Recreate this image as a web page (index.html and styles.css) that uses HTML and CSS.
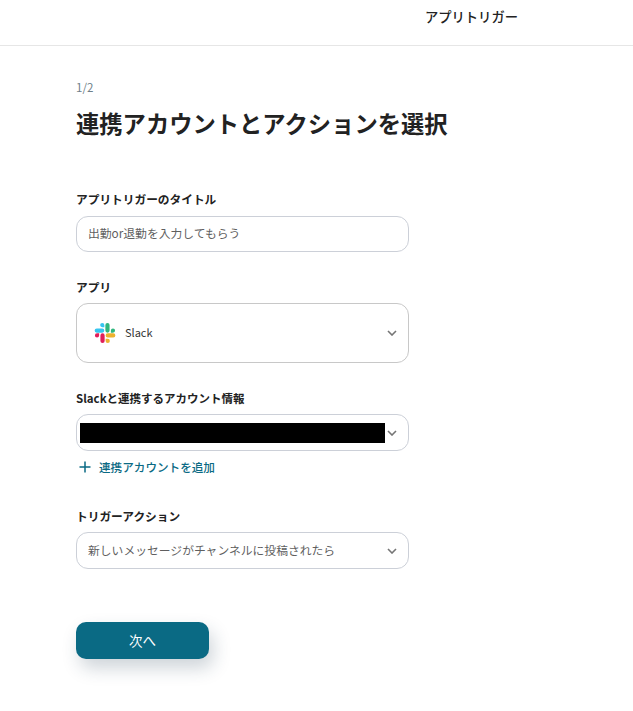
FILE: index.html
```html
<!DOCTYPE html>
<html lang="ja">
<head>
  <meta charset="UTF-8" />
  <meta name="viewport" content="width=device-width, initial-scale=1.0"/>
  <title>アプリトリガー</title>
  <link rel="stylesheet" href="styles.css">
</head>
<body>
  <header class="topbar">
    <span class="topbar-title">アプリトリガー</span>
  </header>

  <main class="content">
    <p class="step">1/2</p>
    <h1 class="heading">連携アカウントとアクションを選択</h1>

    <div class="field field-title">
      <label class="label">アプリトリガーのタイトル</label>
      <div class="box box-text"><span class="box-value">出勤or退勤を入力してもらう</span></div>
    </div>

    <div class="field field-app">
      <label class="label">アプリ</label>
      <div class="box box-app">
        <svg class="slack-logo" viewBox="0 0 24 24" width="22" height="22">
          <path fill="#36c5f0" d="M9 1a2.3 2.3 0 0 0 0 4.6h2.3V3.3A2.3 2.3 0 0 0 9 1zM9 7H3a2.3 2.3 0 0 0 0 4.6h6A2.3 2.3 0 0 0 9 7z"/>
          <path fill="#2eb67d" d="M23 9.3a2.3 2.3 0 0 0-4.6 0v2.3h2.3A2.3 2.3 0 0 0 23 9.3zM17 9.3v-6a2.3 2.3 0 0 0-4.6 0v6a2.3 2.3 0 0 0 4.6 0z"/>
          <path fill="#ecb22e" d="M15 23a2.3 2.3 0 0 0 0-4.6h-2.3v2.3A2.3 2.3 0 0 0 15 23zM15 17h6a2.3 2.3 0 0 0 0-4.6h-6a2.3 2.3 0 0 0 0 4.6z"/>
          <path fill="#e01e5a" d="M1 14.7a2.3 2.3 0 0 0 4.6 0v-2.3H3.3A2.3 2.3 0 0 0 1 14.7zM7 14.7v6a2.3 2.3 0 0 0 4.6 0v-6a2.3 2.3 0 0 0-4.6 0z"/>
        </svg>
        <span class="app-name">Slack</span>
        <svg class="chevron" viewBox="0 0 10 6" width="10" height="6"><path d="M1 1l4 4 4-4" fill="none" stroke="#757575" stroke-width="1.6"/></svg>
      </div>
    </div>

    <div class="field field-account">
      <label class="label label-slack">Slackと連携するアカウント情報</label>
      <div class="box box-account">
        <div class="redacted"></div>
        <svg class="chevron" viewBox="0 0 10 6" width="10" height="6"><path d="M1 1l4 4 4-4" fill="none" stroke="#757575" stroke-width="1.6"/></svg>
      </div>
      <a class="add-link" href="#">
        <svg viewBox="0 0 12 12" width="12" height="12"><path d="M6 .5v11M.5 6h11" stroke="#0a6a84" stroke-width="1.5"/></svg>
        <span>連携アカウントを追加</span>
      </a>
    </div>

    <div class="field field-action">
      <label class="label">トリガーアクション</label>
      <div class="box box-text box-select">
        <span class="box-value">新しいメッセージがチャンネルに投稿されたら</span>
        <svg class="chevron" viewBox="0 0 10 6" width="10" height="6"><path d="M1 1l4 4 4-4" fill="none" stroke="#757575" stroke-width="1.6"/></svg>
      </div>
    </div>

    <button class="next-btn">次へ</button>
  </main>
</body>
</html>
```

FILE: styles.css
```css
body {
  margin: 0;
  background: #fff;
  color: #222;
  font-family: "Noto Sans CJK JP", "Noto Sans", sans-serif;
}

.topbar {
  height: 45px;
  border-bottom: 1px solid #e6e6e6;
  display: flex;
  justify-content: flex-end;
  padding-right: 115px;
}

.topbar-title {
  font-size: 13.3px;
  font-weight: 500;
  line-height: 34px;
}

.content {
  padding-left: 76px;
  width: 333px;
  padding-bottom: 40px;
}

.step {
  margin: 0;
  padding-top: 32px;
  font-size: 11.5px;
  line-height: 18px;
  color: #6f7f8a;
}

.heading {
  margin: 10px 0 0;
  font-size: 23.3px;
  font-weight: 700;
  line-height: 34px;
  white-space: nowrap;
}

.field-title { margin-top: 50px; }
.field-title .label { margin-bottom: 8px; }
.field-app { margin-top: 26px; }
.field-account { margin-top: 26px; }
.field-action { margin-top: 30px; }

.label {
  display: block;
  font-size: 11.7px;
  font-weight: 700;
  line-height: 18px;
  margin-bottom: 7px;
}

.label-slack {
  font-size: 11.5px;
}

.box {
  box-sizing: border-box;
  border: 1px solid #ccd0d8;
  border-radius: 12px;
  display: flex;
  align-items: center;
  background: #fff;
}

.box-text {
  height: 36px;
  padding-left: 11px;
  font-size: 11.8px;
  color: #5f5f5f;
}

.box-value {
  margin-bottom: 4px;
}

.box-select {
  height: 37px;
  justify-content: space-between;
  padding-right: 11px;
}

.box-select .box-value {
  margin-bottom: 2px;
}

.box-app {
  height: 60px;
  padding: 0 11px 0 17px;
  border-color: #c8c8c8;
}

.slack-logo {
  flex-shrink: 0;
}

.app-name {
  margin-left: 9px;
  margin-bottom: 3px;
  font-size: 11px;
  color: #333;
  flex: 1;
}

.box-account {
  height: 37px;
  padding: 0 11px 0 3px;
  justify-content: space-between;
}

.redacted {
  width: 305px;
  height: 20px;
  background: #000;
}

.add-link {
  display: flex;
  align-items: center;
  gap: 8px;
  margin: 6px 0 0 3px;
  font-size: 11.6px;
  font-weight: 500;
  line-height: 20px;
  color: #0a6a84;
  text-decoration: none;
}

.next-btn {
  display: block;
  margin-top: 53px;
  width: 133px;
  height: 37px;
  border: none;
  border-radius: 10px;
  background: #0a6a84;
  color: #fff;
  font-family: inherit;
  font-size: 13.5px;
  padding-bottom: 2px;
  box-shadow: 4px 9px 18px rgba(30, 60, 80, 0.22);
}
```
